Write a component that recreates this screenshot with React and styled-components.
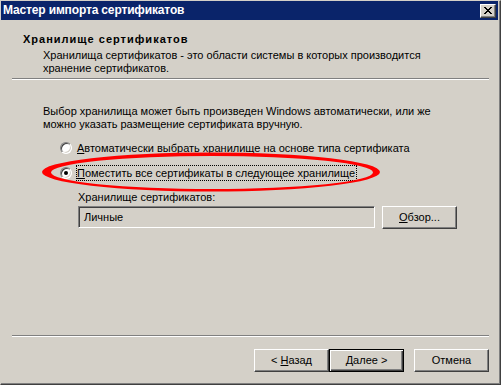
import React from 'react';
import styled, { createGlobalStyle } from 'styled-components';

const Global = createGlobalStyle`
  html, body {
    margin: 0;
    padding: 0;
    background: #d4d0c8;
  }
  * {
    box-sizing: border-box;
  }
`;

const S = {
  Window: styled.div`
    position: relative;
    width: 501px;
    height: 385px;
    display: flex;
    flex-direction: column;
    background: #d4d0c8;
    border-top: 1px solid #d4d0c8;
    border-left: 1px solid #d4d0c8;
    border-right: 1px solid #404040;
    border-bottom: 1px solid #404040;
    box-shadow: inset -1px -1px #808080;
    padding: 0 2px 1px 0;
    font-family: 'Liberation Sans', Arial, sans-serif;
    font-size: 11px;
    line-height: 13px;
    color: #000;
  `,
  TitleBar: styled.div`
    height: 19px;
    flex: none;
    display: flex;
    align-items: center;
    justify-content: space-between;
    background: #0a246a;
    color: #fff;
    font-weight: bold;
    font-size: 12px;
    letter-spacing: -0.15px;
    padding: 0 2px 0 2px;
  `,
  CloseButton: styled.div`
    width: 16px;
    height: 14px;
    display: flex;
    align-items: center;
    justify-content: center;
    background: #d4d0c8;
    border: 1px solid;
    border-color: #fff #404040 #404040 #fff;
    box-shadow: inset -1px -1px #808080;
  `,
  Header: styled.div`
    flex: none;
    padding: 13px 0 0 22px;
  `,
  Heading: styled.div`
    font-weight: bold;
    letter-spacing: 1px;
  `,
  Description: styled.div`
    margin: 3px 0 0 20px;
  `,
  Separator: styled.div`
    flex: none;
    height: 2px;
    margin: ${(p) => p.$top || 0}px 9px 0 11px;
    border-top: 1px solid #808080;
    border-bottom: 1px solid #fff;
  `,
  Main: styled.div`
    flex: 1;
    display: flex;
    flex-direction: column;
    padding: 25px 0 0 42px;
  `,
  Options: styled.div`
    display: flex;
    flex-direction: column;
    gap: 9px;
    margin: 9px 0 0 17px;
  `,
  RadioRow: styled.div`
    display: flex;
    align-items: center;
    height: 16px;
    gap: 4px;
  `,
  Radio: styled.span`
    position: relative;
    width: 12px;
    height: 12px;
    border-radius: 50%;
    background: #fff;
    border: 1px solid;
    border-color: #808080 #fff #fff #808080;
    box-shadow: inset 1px 1px #404040, inset -1px -1px #d4d0c8;
    &::after {
      content: '';
      display: ${(p) => (p.$checked ? 'block' : 'none')};
      position: absolute;
      left: 3px;
      top: 3px;
      width: 4px;
      height: 4px;
      border-radius: 50%;
      background: #000;
    }
  `,
  Label: styled.span`
    height: 16px;
    line-height: 14px;
    white-space: nowrap;
    padding-right: 1px;
    border: 1px dotted ${(p) => (p.$focused ? '#000' : 'transparent')};
  `,
  StoreBlock: styled.div`
    margin: 10px 0 0 35px;
    display: flex;
    flex-direction: column;
    gap: 2px;
  `,
  StoreRow: styled.div`
    display: flex;
    align-items: flex-start;
    gap: 7px;
  `,
  TextBox: styled.div`
    width: 297px;
    height: 22px;
    padding: 0 5px;
    display: flex;
    align-items: center;
    background: #d4d0c8;
    border: 1px solid;
    border-color: #808080 #fff #fff #808080;
    box-shadow: inset 1px 1px #404040, inset -1px -1px #d4d0c8;
  `,
  Footer: styled.div`
    flex: none;
    display: flex;
    justify-content: flex-end;
    padding: 12px 9px 11px 0;
  `,
  Button: styled.button`
    width: 75px;
    height: 23px;
    margin-left: ${(p) => p.$gap || 0}px;
    padding: 0;
    font: inherit;
    color: #000;
    background: #d4d0c8;
    border: 1px solid;
    border-color: ${(p) => (p.$default ? '#000' : '#fff #404040 #404040 #fff')};
    box-shadow: ${(p) => (p.$default
    ? 'inset 1px 1px #fff, inset -1px -1px #404040, inset -2px -2px #808080'
    : 'inset -1px -1px #808080')};
    u {
      text-decoration: underline;
    }
  `,
  Marker: styled.svg`
    position: absolute;
    left: 40px;
    top: 150px;
    pointer-events: none;
  `,
};

function App() {
  return (
    <>
      <Global />
      <S.Window>
        <S.TitleBar>
          <span>Мастер импорта сертификатов</span>
          <S.CloseButton>
            <svg width="8" height="7" viewBox="0 0 8 7" shapeRendering="crispEdges">
              <path d="M0 0h2v1h-2z M6 0h2v1h-2z M1 1h2v1h-2z M5 1h2v1h-2z M2 2h4v1h-4z M3 3h2v1h-2z M2 4h4v1h-4z M1 5h2v1h-2z M5 5h2v1h-2z M0 6h2v1h-2z M6 6h2v1h-2z" fill="#000" />
            </svg>
          </S.CloseButton>
        </S.TitleBar>

        <S.Header>
          <S.Heading>Хранилище сертификатов</S.Heading>
          <S.Description>
            Хранилища сертификатов - это области системы в которых производится
            <br />
            хранение сертификатов.
          </S.Description>
        </S.Header>
        <S.Separator $top={3} />

        <S.Main>
          <div>
            Выбор хранилища может быть произведен Windows автоматически, или же
            <br />
            можно указать размещение сертификата вручную.
          </div>
          <S.Options>
            <S.RadioRow>
              <S.Radio />
              <S.Label><u>А</u>втоматически выбрать хранилище на основе типа сертификата</S.Label>
            </S.RadioRow>
            <S.RadioRow>
              <S.Radio $checked />
              <S.Label $focused><u>П</u>оместить все сертификаты в следующее хранилище</S.Label>
            </S.RadioRow>
          </S.Options>
          <S.StoreBlock>
            <span>Хранилище сертификатов:</span>
            <S.StoreRow>
              <S.TextBox>Личные</S.TextBox>
              <S.Button><u>О</u>бзор...</S.Button>
            </S.StoreRow>
          </S.StoreBlock>
        </S.Main>

        <S.Separator />
        <S.Footer>
          <S.Button>&lt; <u>Н</u>азад</S.Button>
          <S.Button $default><u>Д</u>алее &gt;</S.Button>
          <S.Button $gap={10}>Отмена</S.Button>
        </S.Footer>

        <S.Marker width="342" height="42" viewBox="0 0 342 42">
          <path
            fillRule="evenodd"
            fill="#ff0000"
            d="M1 21 A169 19.5 0 1 0 339 21 A169 19.5 0 1 0 1 21 Z M10 21.5 A161 16.5 0 1 0 332 21.5 A161 16.5 0 1 0 10 21.5 Z"
          />
        </S.Marker>
      </S.Window>
    </>
  );
}

export default App;
